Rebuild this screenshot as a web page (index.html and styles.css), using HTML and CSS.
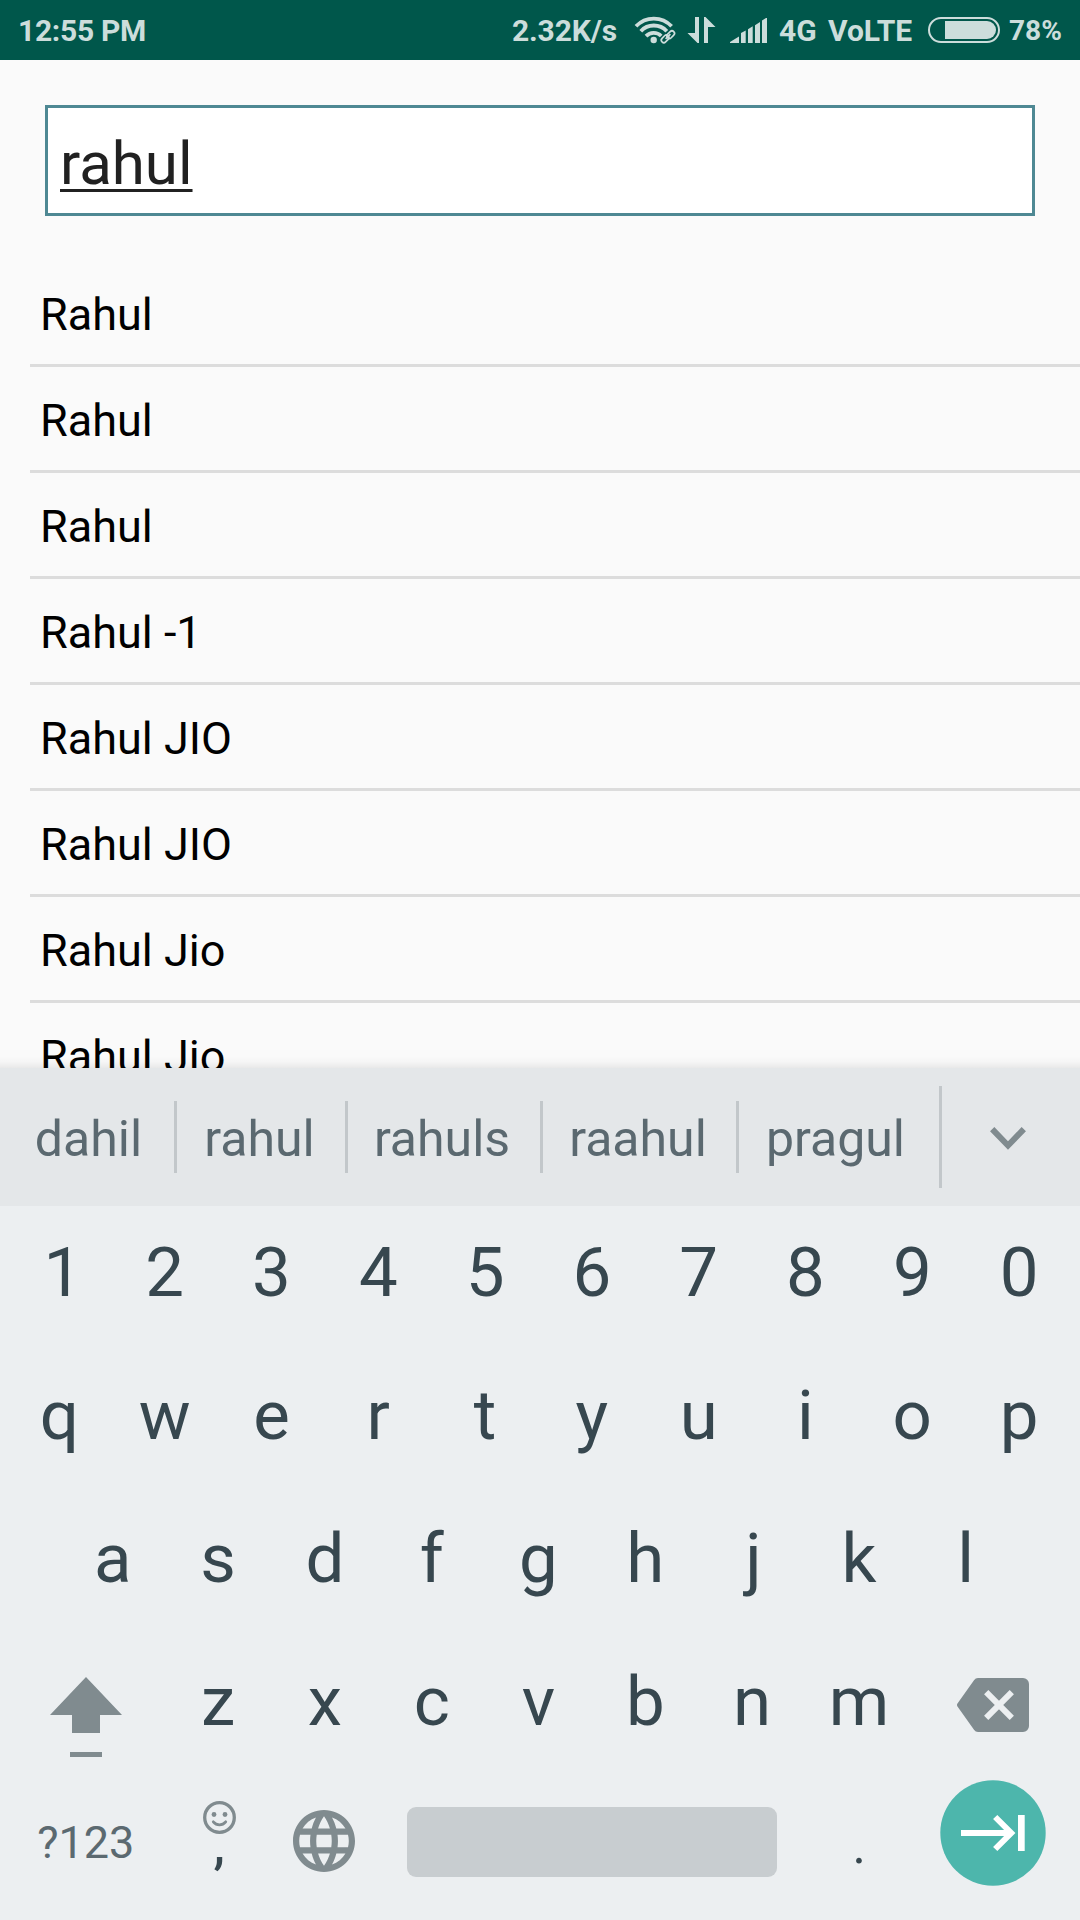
FILE: index.html
```html
<!DOCTYPE html>
<html lang="en">
<head>
<meta charset="utf-8">
<title>Contact search</title>
<link rel="stylesheet" href="styles.css">
</head>
<body>
<div class="screen">
  <header class="status">
    <span class="clock">12:55 PM</span>
    <span class="rate">2.32K/s</span>
    <svg class="status-icons" width="134" height="30" viewBox="634 15 134 30">
      <g fill="none" stroke="currentColor" stroke-width="3.8">
        <path d="M636 26.3a24.3 24.3 0 0 1 35.6 0"/>
        <path d="M640.800 31.200a17.700 17.700 0 0 1 26 0"/>
        <path d="M646 36.200a10.800 10.800 0 0 1 15.200 -.2"/>
      </g>
      <circle cx="653.700" cy="40" r="3.200" fill="currentColor"/>
      <g class="link" fill="none" stroke-width="1.700">
        <rect x="660.800" y="36.300" width="8.600" height="5" rx="2.500" transform="rotate(-45 665.100 38.800)" />
        <rect x="666.400" y="32.200" width="8.600" height="5" rx="2.500" transform="rotate(-45 670.700 34.700)" />
        <path d="M665.600 38.800l4.800-4.700"/>
      </g>
      <path fill="currentColor" d="M695 17h4v26h-1.500l-10-10h7.500zM704 43V17h1.500l10 10H708v16z"/>
      <path fill="currentColor" d="M730 43v-1l9-5.500V43zM741 43v-10l4.700-2.500V43zM748 43V29.300l4.700-3V43zM755 43V25.200l5-3.200V43zM762 43V20.500l4-2.500h1v25z"/>
    </svg>
    <span class="network">4G</span>
    <span class="volte">VoLTE</span>
    <span class="battery"><span class="battery-level" style="width:51px"></span></span>
    <span class="percent">78%</span>
  </header>

  <main class="content">
    <div class="search"><span class="query">rahul</span></div>
    <ul class="results">
      <li>Rahul</li>
      <li>Rahul</li>
      <li>Rahul</li>
      <li>Rahul -1</li>
      <li>Rahul JIO</li>
      <li>Rahul JIO</li>
      <li>Rahul Jio</li>
      <li>Rahul Jio</li>
    </ul>
  </main>

  <section class="keyboard">
    <div class="suggestions">
      <span class="word w1">dahil</span><i class="sep"></i>
      <span class="word w2">rahul</span><i class="sep"></i>
      <span class="word w3">rahuls</span><i class="sep"></i>
      <span class="word w4">raahul</span><i class="sep"></i>
      <span class="word w5">pragul</span><i class="sep tall"></i>
      <span class="more">
        <svg width="36" height="24" viewBox="0 0 36 24"><path d="M2.200 2.200L18 18.500L33.800 2.200" fill="none" stroke="currentColor" stroke-width="6"/></svg>
      </span>
    </div>
    <div class="row">
      <span class="one">1</span><span>2</span><span>3</span><span>4</span><span>5</span><span>6</span><span>7</span><span>8</span><span>9</span><span>0</span>
    </div>
    <div class="row">
      <span class="nudge">q</span><span>w</span><span>e</span><span>r</span><span>t</span><span>y</span><span>u</span><span>i</span><span>o</span><span>p</span>
    </div>
    <div class="row">
      <span class="nudge">a</span><span>s</span><span>d</span><span>f</span><span>g</span><span>h</span><span class="nudge">j</span><span>k</span><span>l</span>
    </div>
    <div class="row">
      <span class="wide shift">
        <svg width="72" height="80" viewBox="0 0 72 80" fill="currentColor"><path d="M36 0L72 38H50V56H22V38H0zM20 75h32v5H20z"/></svg>
      </span>
      <span>z</span><span>x</span><span>c</span><span>v</span><span>b</span><span>n</span><span>m</span>
      <span class="wide erase">
        <svg width="72" height="54" viewBox="0 0 72 54"><path fill="currentColor" d="M21 0H66a6 6 0 0 1 6 6V48a6 6 0 0 1-6 6H21q-2.500 0-4-2.300L.3 28.200q-.6-1.200 0-2.400L17 2.300Q18.500 0 21 0z"/><path class="cross" d="M29.200 14.200L54.800 39.800M54.800 14.200L29.200 39.800"/></svg>
      </span>
    </div>
    <div class="row bottom">
      <span class="wide symbols">?123</span>
      <span class="comma">
        <svg width="33" height="33" viewBox="0 0 33 33"><circle cx="16.500" cy="16.500" r="14.800" fill="none" stroke="currentColor" stroke-width="3.300"/><circle cx="11" cy="13.500" r="2.400" fill="currentColor"/><circle cx="22" cy="13.500" r="2.400" fill="currentColor"/><path d="M10.300 20.800q2.500 3 6.200 3t6.200-3" fill="none" stroke="currentColor" stroke-width="2.800" stroke-linecap="round"/></svg>
        <b>,</b>
      </span>
      <span class="globe">
        <svg width="62" height="62" viewBox="2 2 20 20" fill="currentColor"><path d="M11.990 2C6.470 2 2 6.480 2 12s4.470 10 9.990 10C17.520 22 22 17.520 22 12S17.520 2 11.990 2zm6.930 6h-2.950c-.32-1.250-.78-2.450-1.380-3.560 1.840.63 3.370 1.910 4.330 3.560zM12 4.040c.83 1.200 1.480 2.530 1.910 3.960h-3.820c.43-1.430 1.080-2.760 1.910-3.960zM4.260 14C4.100 13.360 4 12.690 4 12s.1-1.360.26-2h3.380c-.08.66-.14 1.320-.14 2 0 .68.060 1.340.14 2H4.260zm.82 2h2.950c.32 1.250.78 2.450 1.380 3.560-1.840-.63-3.370-1.900-4.330-3.560zm2.950-8H5.080c.96-1.660 2.490-2.930 4.330-3.560C8.810 5.550 8.350 6.750 8.030 8zM12 19.960c-.83-1.200-1.480-2.530-1.910-3.960h3.820c-.43 1.430-1.080 2.760-1.910 3.960zM14.340 14H9.660c-.09-.66-.16-1.320-.16-2 0-.68.070-1.350.16-2h4.680c.09.65.16 1.320.16 2 0 .68-.07 1.340-.16 2zm.25 5.560c.6-1.110 1.060-2.310 1.380-3.560h2.950c-.96 1.650-2.490 2.930-4.330 3.560zM16.360 14c.08-.66.14-1.320.14-2 0-.68-.06-1.340-.14-2h3.380c.16.64.26 1.310.26 2s-.1 1.360-.26 2h-3.380z"/></svg>
      </span>
      <span class="space"><i></i></span>
      <span class="period">.</span>
      <span class="wide enter">
        <svg width="106" height="106" viewBox="0 0 106 106"><circle cx="53" cy="53" r="52.700" fill="#4db6ac"/><path d="M21 53H70M55.200 37L71.200 53L55.200 69" fill="none" stroke="#fff" stroke-width="6"/><path d="M78 35h6.700v36h-6.700z" fill="#fff"/></svg>
      </span>
    </div>
  </section>
</div>
</body>
</html>
```
FILE: styles.css
```css
* { box-sizing: border-box; }
body {
  margin: 0;
  font-family: Roboto, sans-serif;
}
.screen {
  display: flex;
  flex-direction: column;
  width: 1080px;
  height: 1920px;
  overflow: hidden;
  background: #fafafa;
}
svg { display: block; flex: none; }

/* status bar */
.status {
  display: flex;
  align-items: center;
  flex: none;
  height: 60px;
  padding: 0 18px;
  background: #00574b;
  color: #ccdddb;
  font-size: 30px;
  font-weight: 700;
  line-height: 58px;
  white-space: nowrap;
}
.status > span:not(.battery) { padding-top: 2px; }
.clock {
  width: 494px;
  letter-spacing: -.3px;
}
.rate {
  width: 122px;
  letter-spacing: -.15px;
}
.status-icons { margin-right: 11px; }
.link { stroke: currentColor; }
.network { width: 49px; }
.volte { width: 100px; }
.battery {
  display: flex;
  justify-content: flex-end;
  flex: none;
  width: 72px;
  height: 26px;
  padding: 2px;
  border: 2px solid currentColor;
  border-radius: 13px;
}
.battery-level {
  background: currentColor;
  border-radius: 0 9px 9px 0;
}
.percent {
  margin-left: 9px;
  font-size: 28px;
}

/* search and results */
.content {
  flex: none;
  height: 1008px;
  padding-top: 45px;
  overflow: hidden;
}
.search {
  height: 111px;
  margin: 0 45px 45px;
  padding: 2px 12px 0;
  border: 3px solid #4e8893;
  background: #fff;
  color: #212121;
  font-size: 60px;
  line-height: 107px;
}
.query {
  text-decoration: underline;
  text-decoration-thickness: 3px;
  text-underline-offset: 5px;
  text-decoration-skip-ink: none;
}
.results {
  margin: 0 0 0 30px;
  padding: 0;
  list-style: none;
  color: #000;
  font-size: 45px;
}
.results li {
  height: 106px;
  padding: 4px 0 0 10px;
  border-bottom: 3px solid #dcdcdc;
  line-height: 99px;
}

/* keyboard */
.keyboard {
  position: relative;
  flex: none;
  height: 852px;
  background: #eceff1;
  color: #37474f;
}
.keyboard::before {
  content: "";
  position: absolute;
  right: 0;
  bottom: 100%;
  left: 0;
  height: 12px;
  background: linear-gradient(transparent, rgba(0, 0, 0, .02) 50%, rgba(0, 0, 0, .07));
}
.suggestions {
  display: flex;
  align-items: center;
  height: 138px;
  background: #e4e7e9;
  color: #5b6970;
  font-size: 50px;
}
.word {
  padding-top: 5px;
  line-height: 133px;
  text-align: center;
}
.w1 { width: 174px; padding-left: 3px; }
.w2 { width: 168px; padding-right: 3px; }
.w3 { width: 192px; padding-right: 4px; }
.w4 { width: 193px; padding-right: 3px; }
.w5 { width: 200px; padding-right: 7px; }
.sep {
  width: 3px;
  height: 72px;
  background: #c2c7ca;
}
.sep.tall { height: 102px; }
.more {
  display: flex;
  justify-content: center;
  flex: 1;
  padding: 4px 6px 0 0;
  color: #808b8f;
}
.row {
  display: flex;
  justify-content: center;
  height: 143px;
  padding-right: 3px;
  font-size: 69px;
  line-height: 133px;
}
.row > span {
  flex: none;
  width: 106.8px;
  text-align: center;
}
.row > .wide { width: 160px; }
.row > .one { padding-left: 10px; }
.row > .nudge { padding-left: 3px; }
.shift, .erase, .globe, .comma svg { color: #808b8f; }
.shift { padding: 42px 0 0 45.3px; }
.erase { padding: 43px 0 0 44.5px; }
.cross {
  fill: none;
  stroke: #eceff1;
  stroke-width: 6;
}
.row.bottom {
  height: 142px;
  padding-right: 2px;
}
.row > .symbols {
  padding: 3px 0 0 1px;
  color: #5b6970;
  font-size: 45px;
  line-height: 123px;
}
.comma {
  display: flex;
  flex-direction: column;
  align-items: center;
  padding: 23px 0 0 1px;
}
.comma b, .period { font-size: 51px; font-weight: 500; }
.comma b { line-height: 24px; }
.globe { padding: 32px 0 0 21px; }
.row > .space {
  width: 427px;
  padding: 29px 29px 0 28px;
}
.space i {
  display: block;
  height: 70px;
  border-radius: 9px;
  background: #c8cdd0;
}
.row .period {
  font-weight: 400;
  line-height: 136px;
}
.enter { padding: 2px 0 0 27px; }
```
